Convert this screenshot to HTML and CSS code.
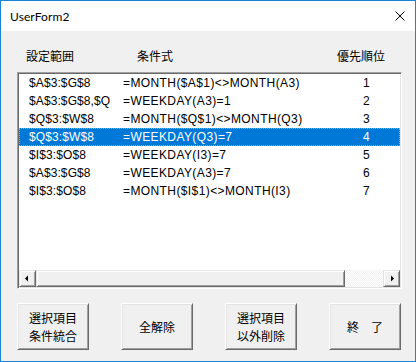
FILE: index.html
```html
<!DOCTYPE html>
<html lang="ja">
<head>
<meta charset="utf-8">
<title>UserForm2</title>
<link rel="stylesheet" href="styles.css">
</head>
<body>
<div class="window">
  <div class="titlebar">
    <span class="title">UserForm2</span>
    <svg class="close" width="10" height="10" viewBox="0 0 10 10"><path d="M0.5 0.5 L9.5 9.5 M9.5 0.5 L0.5 9.5" stroke="#000" stroke-width="1" fill="none"/></svg>
  </div>
  <div class="client">
    <div class="headers">
      <span class="h1">設定範囲</span>
      <span class="h2">条件式</span>
      <span class="h3">優先順位</span>
    </div>
    <div class="listbox">
      <div class="rows">
        <div class="row"><span class="c1">$A$3:$G$8</span><span class="c2">=MONTH($A$1)&lt;&gt;MONTH(A3)</span><span class="c3">1</span></div>
        <div class="row"><span class="c1">$A$3:$G$8,$Q</span><span class="c2">=WEEKDAY(A3)=1</span><span class="c3">2</span></div>
        <div class="row"><span class="c1">$Q$3:$W$8</span><span class="c2">=MONTH($Q$1)&lt;&gt;MONTH(Q3)</span><span class="c3">3</span></div>
        <div class="row selected"><span class="c1">$Q$3:$W$8</span><span class="c2">=WEEKDAY(Q3)=7</span><span class="c3">4</span></div>
        <div class="row"><span class="c1">$I$3:$O$8</span><span class="c2">=WEEKDAY(I3)=7</span><span class="c3">5</span></div>
        <div class="row"><span class="c1">$A$3:$G$8</span><span class="c2">=WEEKDAY(A3)=7</span><span class="c3">6</span></div>
        <div class="row"><span class="c1">$I$3:$O$8</span><span class="c2">=MONTH($I$1)&lt;&gt;MONTH(I3)</span><span class="c3">7</span></div>
      </div>
      <div class="hscroll">
        <div class="sbtn"><svg width="17" height="17" viewBox="0 0 17 17"><path d="M6 8.5 L9 5.5 L9 11.5 Z" fill="#000"/></svg></div>
        <div class="thumb"></div>
        <div class="track"></div>
        <div class="sbtn"><svg width="17" height="17" viewBox="0 0 17 17"><path d="M11 8.5 L8 5.5 L8 11.5 Z" fill="#000"/></svg></div>
      </div>
    </div>
    <div class="buttons">
      <div class="btn">選択項目<br>条件統合</div>
      <div class="btn">全解除</div>
      <div class="btn">選択項目<br>以外削除</div>
      <div class="btn">終　了</div>
    </div>
  </div>
</div>
</body>
</html>
```
FILE: styles.css
```css
html, body {
  margin: 0;
  padding: 0;
  background: #f0f0f0;
}
.window {
  width: 416px;
  height: 362px;
  box-sizing: border-box;
  border: 1px solid #1883d7;
  display: flex;
  flex-direction: column;
  background: #f0f0f0;
  font-family: "Noto Sans CJK JP", sans-serif;
  font-size: 12px;
  color: #000;
}
.titlebar {
  height: 30px;
  background: #fff;
  display: flex;
  align-items: center;
  justify-content: space-between;
  padding: 0 10px 0 9px;
  flex: none;
}
.title {
  font-family: "Lato", "Liberation Sans", sans-serif;
  font-size: 12px;
  letter-spacing: 0.1px;
}
.close {
  display: block;
}
.client {
  flex: 1;
  padding: 17px 13px 0 16px;
  display: flex;
  flex-direction: column;
}
.headers {
  height: 16px;
  line-height: 16px;
  display: grid;
  grid-template-columns: 111px 200px auto;
  padding-left: 9px;
  margin-bottom: 8px;
}
.listbox {
  height: 217px;
  box-sizing: border-box;
  border-style: solid;
  border-width: 1px;
  border-color: #a0a0a0 #fff #fff #a0a0a0;
  box-shadow: inset 1px 1px #696969, inset -1px -1px #e3e3e3;
  background: #fff;
  padding: 1px;
  display: flex;
  flex-direction: column;
}
.rows {
  flex: 1;
  padding-top: 0;
}
.row {
  height: 18px;
  line-height: 18px;
  display: grid;
  grid-template-columns: 94px 240px auto;
  padding-left: 10px;
  font-family: "Liberation Sans", "Noto Sans CJK JP", sans-serif;
  box-sizing: border-box;
  white-space: nowrap;
}
.row .c1 {
  letter-spacing: 0.1px;
}
.row .c2 {
  letter-spacing: 0.4px;
}
.row.selected {
  background: #0078d7;
  color: #fff;
  outline: 1px dotted #ff9a2e;
  outline-offset: -1px;
}
.hscroll {
  height: 17px;
  display: flex;
  flex: none;
}
.sbtn {
  width: 17px;
  height: 17px;
  box-sizing: border-box;
  background: #f0f0f0;
  border-style: solid;
  border-width: 1px;
  border-color: #e3e3e3 #696969 #696969 #e3e3e3;
  box-shadow: inset 1px 1px #fff, inset -1px -1px #a0a0a0;
  position: relative;
}
.sbtn svg {
  position: absolute;
  left: -1px;
  top: -1px;
}
.thumb {
  width: 309px;
  height: 17px;
  box-sizing: border-box;
  background: #f0f0f0;
  border-style: solid;
  border-width: 1px;
  border-color: #e3e3e3 #696969 #696969 #e3e3e3;
  box-shadow: inset 1px 1px #fff, inset -1px -1px #a0a0a0;
}
.track {
  flex: 1;
  background-color: #f0f0f0;
  background-image:
    linear-gradient(45deg, #fff 25%, transparent 25%, transparent 75%, #fff 75%),
    linear-gradient(45deg, #fff 25%, transparent 25%, transparent 75%, #fff 75%);
  background-size: 2px 2px;
  background-position: 0 0, 1px 1px;
}
.buttons {
  margin-top: 14px;
  display: flex;
  gap: 32px;
}
.btn {
  width: 72px;
  height: 47px;
  box-sizing: border-box;
  background: #f0f0f0;
  border-style: solid;
  border-width: 1px;
  border-color: #fff #696969 #696969 #fff;
  box-shadow: inset 1px 1px #e3e3e3, inset -1px -1px #a0a0a0;
  display: flex;
  align-items: center;
  justify-content: center;
  text-align: center;
  line-height: 18px;
  font-size: 12px;
}
```
